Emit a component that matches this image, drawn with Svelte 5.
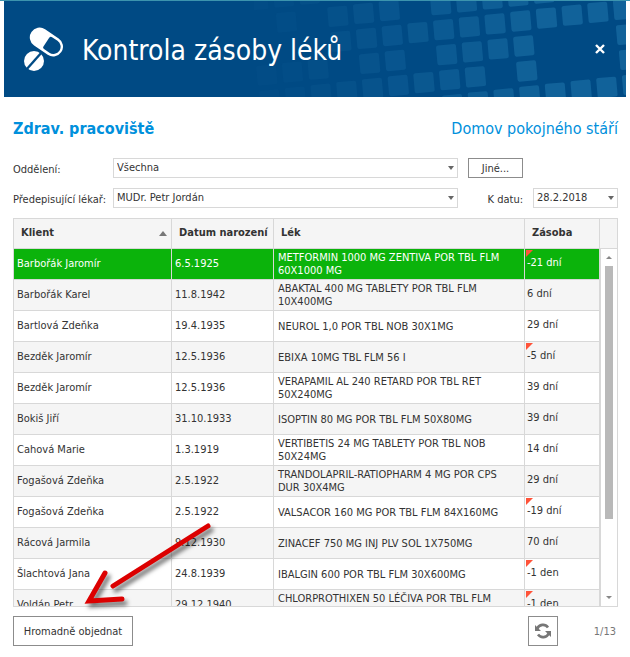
<script>
  const rows = [
    ['Barbořák Jaromír', '6.5.1925', 'METFORMIN 1000 MG ZENTIVA POR TBL FLM 60X1000 MG', '-21 dní'],
    ['Barbořák Karel', '11.8.1942', 'ABAKTAL 400 MG TABLETY POR TBL FLM 10X400MG', '6 dní'],
    ['Bartlová Zdeňka', '19.4.1935', 'NEUROL 1,0 POR TBL NOB 30X1MG', '29 dní'],
    ['Bezděk Jaromír', '12.5.1936', 'EBIXA 10MG TBL FLM 56 I', '-5 dní'],
    ['Bezděk Jaromír', '12.5.1936', 'VERAPAMIL AL 240 RETARD POR TBL RET 50X240MG', '39 dní'],
    ['Bokiš Jiří', '31.10.1933', 'ISOPTIN 80 MG POR TBL FLM 50X80MG', '39 dní'],
    ['Cahová Marie', '1.3.1919', 'VERTIBETIS 24 MG TABLETY POR TBL NOB 50X24MG', '14 dní'],
    ['Fogašová Zdeňka', '2.5.1922', 'TRANDOLAPRIL-RATIOPHARM 4 MG POR CPS DUR 30X4MG', '29 dní'],
    ['Fogašová Zdeňka', '2.5.1922', 'VALSACOR 160 MG POR TBL FLM 84X160MG', '-19 dní'],
    ['Rácová Jarmila', '9.12.1930', 'ZINACEF 750 MG INJ PLV SOL 1X750MG', '70 dní'],
    ['Šlachtová Jana', '24.8.1939', 'IBALGIN 600 POR TBL FLM 30X600MG', '-1 den'],
    ['Voldán Petr', '29.12.1940', 'CHLORPROTHIXEN 50 LÉČIVA POR TBL FLM', '-1 den']
  ];

  // Columns of the header mosaic that are filled, for each slanted row
  const mosaic = [
    [-2, [-8, -7, -6, -5]],
    [-1, [-8, -6, -4, -3, -2, 0, 1, 2, 3, 4]],
    [0, [-8, -4, -3, -2, -1, 0, 1, 2, 3, 4, 5, 6, 7]],
    [1, [-7, -6, -5, -3, -2, 0, 1, 2, 3, 7]],
    [2, [-7, -6, -5, -4, -3, -2, -1, 0, 1, 3, 7]],
    [3, [-1, 0, 1, 2, 3, 4, 5, 6, 7]]
  ];
  const tiles = mosaic.flatMap(([j, cols]) =>
    cols.map((i) => ({
      x: 189.7 + 25.7 * i + 3 * j,
      y: 28.7 - 2.9 * i + 25 * j,
      o: Math.max(0.1, Math.min(0.9, 0.6 + i * 0.08))
    }))
  );
</script>

<div class="window">
  <header>
    <svg class="mosaic" width="372" height="96" viewBox="0 0 372 96" aria-hidden="true">
      {#each tiles as t}
        <rect x="-10" y="-10" width="20" height="20" rx="2" fill="#13659c" fill-opacity={t.o}
          transform={`translate(${t.x} ${t.y}) rotate(-5)`} />
      {/each}
    </svg>
    <svg class="logo" width="40" height="44" viewBox="0 0 40 44" aria-hidden="true">
      <g transform="translate(23.4 15) rotate(34)">
        <rect x="-18" y="-9.8" width="36" height="19.6" rx="9.8" fill="#fff" />
        <path d="M2 -7.2H8.5A7.2 7.2 0 0 1 8.5 7.2H2Q0 7.2 0 5V-5Q0 -7.2 2 -7.2Z" fill="#004a84" />
      </g>
      <circle cx="11" cy="34" r="10" fill="#fff" />
      <path d="M3 43L19 25" stroke="#004a84" stroke-width="2.4" />
    </svg>
    <h1>Kontrola zásoby léků</h1>
    <button class="close" aria-label="Zavřít">
      <svg width="10" height="10" viewBox="0 0 10 10"><path d="M1 1L9 9M9 1L1 9" stroke="#fff" stroke-width="2.4" /></svg>
    </button>
  </header>

  <main>
    <div class="heading">
      <h2>Zdrav. pracoviště</h2>
      <span>Domov pokojného stáří</span>
    </div>

    <form class="filters">
      <label for="dept">Oddělení:</label>
      <div class="field"><select id="dept"><option>Všechna</option></select></div>
      <button type="button" class="other">Jiné...</button>
      <label for="doctor">Předepisující lékař:</label>
      <div class="field"><select id="doctor"><option>MUDr. Petr Jordán</option></select></div>
      <div class="date">
        <label for="date">K datu:</label>
        <div class="field"><input id="date" type="text" value="28.2.2018" /></div>
      </div>
    </form>

    <div class="grid">
      <div class="list">
        <table>
          <colgroup><col class="c1" /><col class="c2" /><col /><col class="c4" /></colgroup>
          <thead>
            <tr>
              <th class="sorted">Klient</th>
              <th>Datum narození</th>
              <th>Lék</th>
              <th>Zásoba</th>
            </tr>
          </thead>
          <tbody>
            {#each rows as [name, born, drug, stock], n}
              <tr class:selected={n === 0}>
                <td>{name}</td>
                <td>{born}</td>
                <td class="drug" class:top={n === rows.length - 1}>{drug}</td>
                <td class="stock" class:low={stock.startsWith('-')}>{stock}</td>
              </tr>
            {/each}
          </tbody>
        </table>
      </div>
      <div class="side">
        <div class="corner"></div>
        <div class="scroll">
          <i class="up"></i>
          <i class="thumb"></i>
          <i class="down"></i>
        </div>
      </div>
      <svg class="pointer" width="140" height="96" viewBox="0 0 140 96" aria-hidden="true">
        <path d="M128 13L33 73M25 60L9 88L42 86" fill="none" stroke="#dc0000" stroke-width="5" stroke-linecap="round" />
      </svg>
    </div>

    <footer>
      <button class="bulk">Hromadně objednat</button>
      <button class="refresh" aria-label="Obnovit">
        <svg width="18" height="18" viewBox="0 0 18 18">
          <path d="M3.2 6.8A6.2 6.2 0 0 1 14 5.4M14.8 11.2A6.2 6.2 0 0 1 4 12.6" fill="none" stroke="#777" stroke-width="2.6" />
          <path d="M1 3V9H7ZM17 15V9H11Z" fill="#777" />
        </svg>
      </button>
      <span>1/13</span>
    </footer>
  </main>
</div>

<style>
  :global(body) { background: #fff; }
  .window, button, input, select {
    font-family: Tahoma, "DejaVu Sans Condensed", "DejaVu Sans", sans-serif;
    font-stretch: condensed;
    font-size: 11px;
    color: #333;
  }
  .window { border-top: 1px solid #3c94ae; }
  * { box-sizing: border-box; }
  button { background: #fff; border: 1px solid #8c8c8c; padding: 0; }
  header {
    position: relative;
    display: flex;
    align-items: center;
    height: 96px;
    margin: 0 4px;
    padding: 0 20px 0 19px;
    background: #004a84;
    overflow: hidden;
  }
  .mosaic { position: absolute; right: 0; top: 0; }
  .logo { position: relative; flex: none; }
  h1 { position: relative; flex: 1; margin: 0 0 0 19px; padding-top: 4px; font-size: 28px; font-weight: 400; line-height: 36px; color: #fff; }
  .close { position: relative; display: flex; align-items: center; justify-content: center; width: 12px; height: 12px; border: 0; background: none; }
  main { padding: 19px 12px 0 13px; }
  .heading { display: flex; justify-content: space-between; align-items: center; height: 24px; color: #0090dc; font-size: 16px; }
  h2 { margin: 0; font-size: 16px; font-weight: 700; }
  .filters {
    display: grid;
    grid-template-columns: 100px minmax(100px, 1fr) 160px;
    grid-template-rows: 20px 20px;
    gap: 10px 0;
    margin-top: 18px;
    align-items: center;
  }
  .filters label { padding-top: 2px; white-space: nowrap; }
  .other { width: 55px; height: 20px; margin-left: 10px; }
  .field { position: relative; height: 20px; }
  .field select, .field input {
    appearance: none;
    display: block;
    width: 100%;
    height: 20px;
    padding: 0 16px 2px 3px;
    border: 1px solid #d8d8d8;
    border-radius: 0;
    background: #fff;
  }
  .field::after {
    content: "";
    position: absolute;
    right: 4px;
    top: 8px;
    border: 4px solid transparent;
    border-width: 4px 3px 0;
    border-top-color: #666;
    pointer-events: none;
  }
  .date { display: flex; align-items: center; justify-content: flex-end; gap: 10px; }
  .date .field { width: 85px; }
  .grid { position: relative; display: flex; height: 389px; margin-top: 10px; border: 1px solid #d8d8d8; }
  .list { flex: 1; overflow: hidden; }
  table { width: 100%; table-layout: fixed; border-collapse: separate; border-spacing: 0; }
  .c1 { width: 158px; }
  .c2 { width: 102px; }
  .c4 { width: 75px; }
  th, td { border-right: 1px solid #d8d8d8; border-bottom: 1px solid #d8d8d8; text-align: left; }
  th { height: 30px; padding: 0 0 2px 7px; background: #f5f5f5; font-size: 11px; font-weight: 700; white-space: nowrap; }
  .sorted::after {
    content: "";
    float: right;
    margin: 5px 4px 0 0;
    border: 4px solid transparent;
    border-bottom: 5px solid #777;
    border-top: 0;
  }
  td { height: 31px; padding: 0 0 1px 3px; white-space: nowrap; }
  .drug { padding: 0 20px 0 4px; line-height: 13px; white-space: normal; }
  .top { padding-top: 2px; vertical-align: top; }
  .stock { position: relative; padding: 0 0 3px 2px; }
  .low::before { content: ""; position: absolute; left: 1px; top: 1px; border: 7px solid transparent; border-width: 7px 7px 0 0; border-top-color: #ff5339; }
  tbody tr:nth-child(even) td { background: #f5f5f5; }
  tbody tr.selected td { background: #0bb30b; color: #fff; }
  .side { flex: none; width: 17px; display: flex; flex-direction: column; }
  .corner { height: 30px; background: #f5f5f5; border-bottom: 1px solid #d8d8d8; }
  .scroll { flex: 1; display: flex; flex-direction: column; align-items: center; padding: 7px 0; border-left: 1px solid #d8d8d8; }
  .up, .down { border: 3px solid transparent; }
  .up { border-top: 0; border-bottom-color: #888; }
  .down { border-bottom: 0; border-top-color: #888; margin-top: auto; }
  .thumb { width: 8px; height: 253px; margin-top: 7px; background: #b9b9b9; }
  .pointer { position: absolute; left: 66px; bottom: -3px; filter: drop-shadow(3px 4px 2px #0008); pointer-events: none; }
  footer { display: flex; align-items: center; margin-top: 9px; }
  .bulk { width: 120px; height: 30px; }
  .refresh { display: flex; align-items: center; justify-content: center; width: 30px; height: 30px; margin-left: auto; }
  footer span { width: 60px; padding-right: 2px; text-align: right; color: #777; }
</style>
